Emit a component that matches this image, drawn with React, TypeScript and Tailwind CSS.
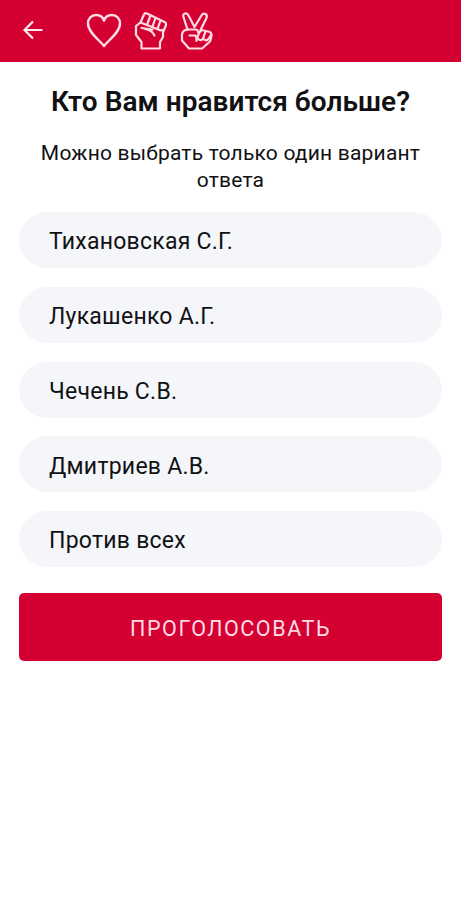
type IconProps = {
  className?: string;
};

const options = [
  "Тихановская С.Г.",
  "Лукашенко А.Г.",
  "Чечень С.В.",
  "Дмитриев А.В.",
  "Против всех",
];

function ArrowIcon({ className }: IconProps) {
  return (
    <svg className={className} viewBox="0 0 22 22" fill="none" stroke="#ffe9ee" strokeWidth="2.2">
      <path d="M20.5 11H3M11 2.5L2.5 11l8.5 8.5" />
    </svg>
  );
}

function HeartIcon({ className }: IconProps) {
  return (
    <svg className={className} viewBox="0 0 36 36" fill="none" stroke="#ffdbe3" strokeWidth="2.4" strokeLinejoin="round">
      <path d="M18 33C14.5 28 2 19.5 2 10.5C2 5.5 5.500 2 10 2C14 2 17 4.500 18 7.500C19 4.500 22 2 26 2C30.500 2 34 5.500 34 10.500C34 19.500 21.500 28 18 33Z" />
    </svg>
  );
}

function FistIcon({ className }: IconProps) {
  return (
    <svg className={className} viewBox="0 0 34 40" fill="none" stroke="#ffdbe3" strokeWidth="2.2" strokeLinejoin="round" strokeLinecap="round">
      <path d="M7.5 37.5V31L2 24V15L6.500 11.500L10 3.500Q11 1.500 13 2.500L30.500 11Q32.500 12 32 14L29 21.500V26L26 31V37.500Z" />
      <path d="M6.5 11.5L24.500 18.500Q27 20 28.500 19" />
      <path d="M16.5 4.5L13.500 12.500M21.500 7L18.500 15.500M26.500 9.500L23.500 18" />
      <path d="M7.5 17L18.500 18.500M11 18Q18 19 20.500 24.500" />
    </svg>
  );
}

function PeaceIcon({ className }: IconProps) {
  return (
    <svg className={className} viewBox="0 0 34 40" fill="none" stroke="#ffdbe3" strokeWidth="2.2" strokeLinejoin="round" strokeLinecap="round">
      <path d="M7.5 18.5L3.500 6Q2.500 3 5 2.500Q7.500 2 8.500 4.500L14.500 16L21.500 4.500Q23 2 25.500 3Q27.500 4.500 26.500 7L20.500 19" />
      <path d="M7.5 18.5Q3 19 2 23V29.500L9 37.500H22L30 30.500L31.500 25Q32 21.500 28.500 20.500L25.500 20Q21 18 19.500 21.500L17.500 25.500Q17.500 28.500 20 29Q22 29.500 23 27.500L25.500 20.500" />
      <path d="M7.5 18.5H15.500Q18.500 19 18 21.500M9.500 24.500H15.500Q16.500 26 16.500 30M23.500 27.500Q25 30.500 28 28.500L31 24" />
    </svg>
  );
}

function App() {
  return (
    <div className="min-h-screen bg-white font-[Roboto,sans-serif] text-[#111114]">
      <header className="flex h-[62px] items-center bg-[#d50032] pb-[3px] pl-[22px]">
        <ArrowIcon className="size-[22px]" />
        <div className="ml-[42px] flex items-center gap-[12px]">
          <HeartIcon className="mt-[3px] size-[36px]" />
          <FistIcon className="mt-[2px] h-[40px] w-[34px]" />
          <PeaceIcon className="mt-[2px] h-[40px] w-[34px]" />
        </div>
      </header>
      <main className="px-[19px] pt-[23px]">
        <h1 className="text-center text-[28px] leading-[34px] font-semibold tracking-[0.04px]">
          Кто Вам нравится больше?
        </h1>
        <p className="mt-[21px] text-center text-[21px] leading-[27px] tracking-[0.2px]">
          Можно выбрать только один вариант ответа
        </p>
        <div className="mt-[18px] flex flex-col gap-[18.8px]">
          {options.map((option) => (
            <button
              key={option}
              className="flex h-[56px] items-center rounded-full bg-[#f4f6fa] pt-[5px] pl-[30px] text-left text-[23px] tracking-[0.25px]"
            >
              {option}
            </button>
          ))}
        </div>
        <button className="mt-[25.8px] h-[68px] w-full rounded-[5px] bg-[#d50032] pt-[4px] text-[21.5px] tracking-[1.55px] text-[#ffdbe3]">
          ПРОГОЛОСОВАТЬ
        </button>
      </main>
    </div>
  );
}

export default App;
